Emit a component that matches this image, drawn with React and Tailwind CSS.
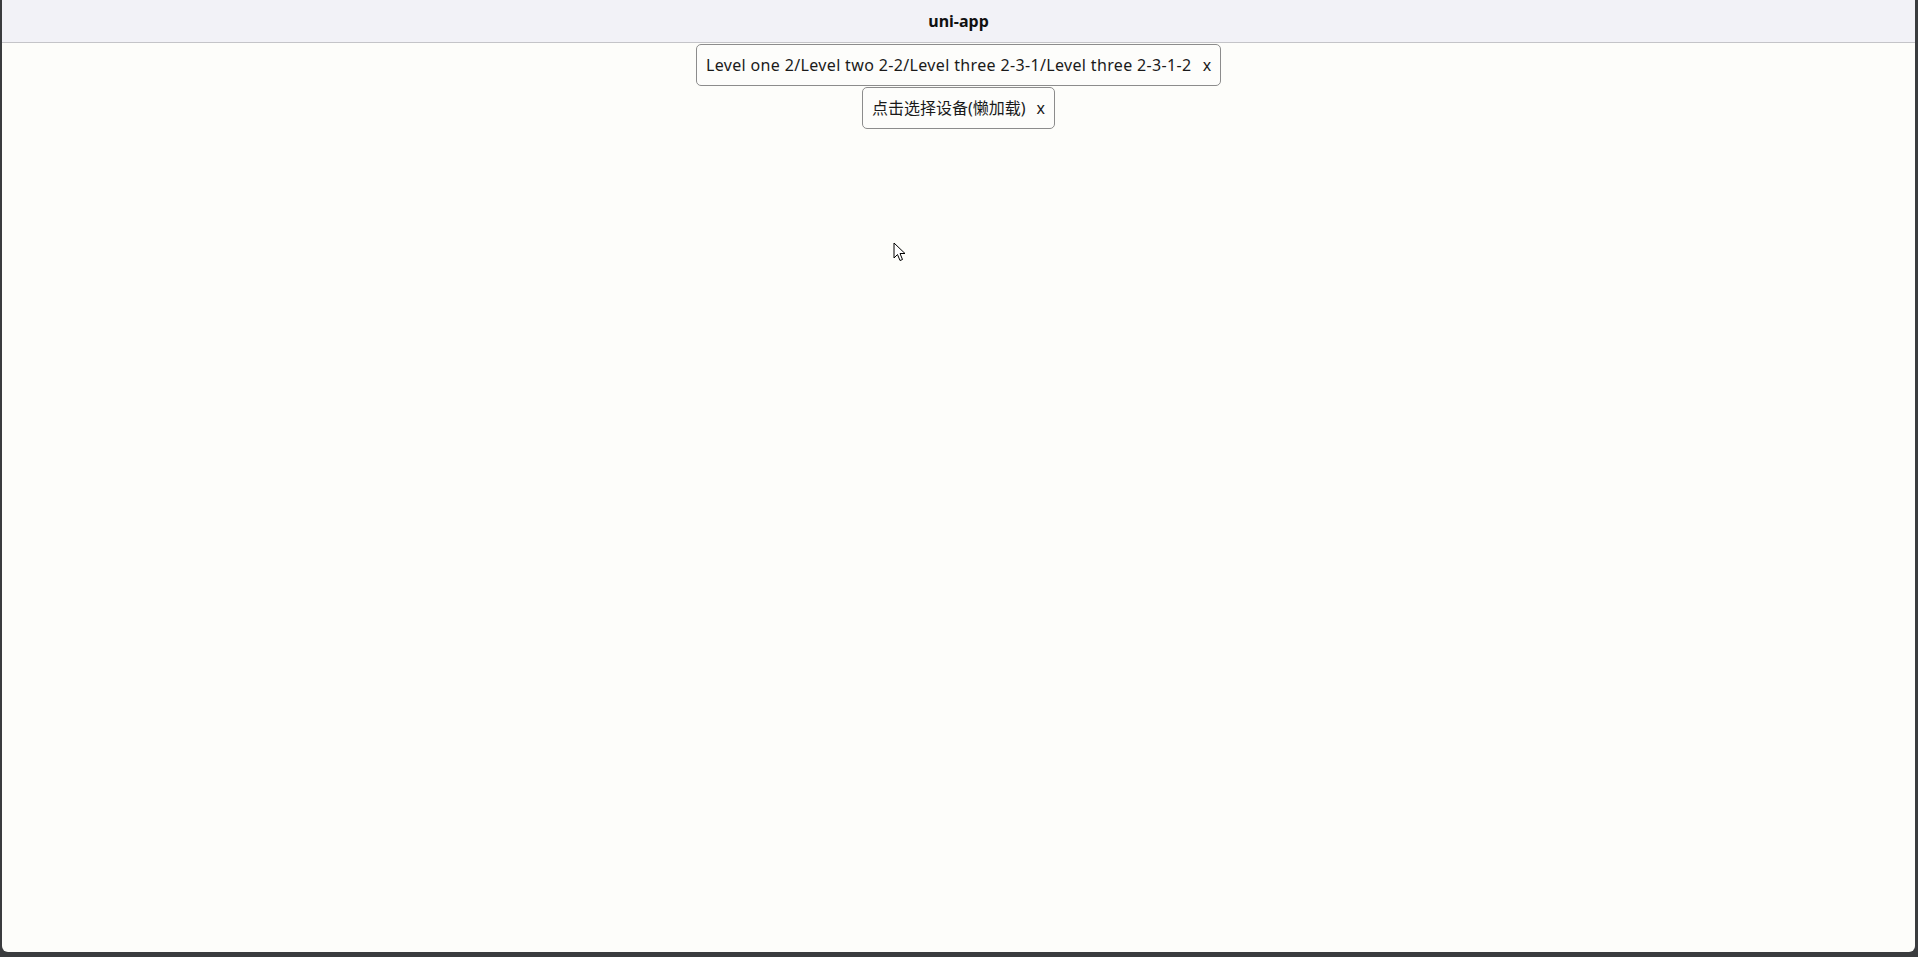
import { useState } from "react";

const font = { fontFamily: '"Noto Sans", "Noto Sans CJK SC", sans-serif' };

const Chip = ({ label, wide, onClear }) => (
  <button
    type="button"
    onClick={onClear}
    className="mt-px flex h-[42px] items-center rounded-[5px] border border-[#8c8c8c] bg-[#fdfdfb] px-[9px] text-[16px] text-[#1a1a1a]"
  >
    <span className={wide ? "tracking-[0.35px]" : ""}>{label}</span>
    <span className="ml-[11px]">x</span>
  </button>
);

const Cursor = () => (
  <svg
    className="pointer-events-none absolute left-[891px] top-[242px]"
    width="13"
    height="21"
    viewBox="0 0 13 21"
  >
    <path
      d="M1 1 L1 16 L4.5 12.5 L7 18.5 L9.5 17.5 L7 11.5 L12 11.5 Z"
      fill="#fff"
      stroke="#000"
      strokeWidth="1"
    />
  </svg>
);

export default function App() {
  const [cascade, setCascade] = useState(
    "Level one 2/Level two 2-2/Level three 2-3-1/Level three 2-3-1-2"
  );
  const [device, setDevice] = useState("点击选择设备(懒加载)");

  return (
    <div className="h-[957px] w-[1918px] bg-[#3a3c3e] pb-[5px] pl-[2px] pr-[3px]" style={font}>
      <div className="relative flex h-full flex-col overflow-hidden rounded-b-[6px] bg-[#fdfdfa]">
        <header className="flex h-[43px] shrink-0 items-center justify-center border-b border-[#c4c4c8] bg-[#f2f2f7]">
          <h1 className="text-[16px] font-bold text-[#111]">uni-app</h1>
        </header>

        <div className="flex flex-col items-center">
          <Chip label={cascade} wide onClear={() => setCascade(cascade)} />
          <Chip label={device} onClear={() => setDevice(device)} />
        </div>

        <Cursor />
      </div>
    </div>
  );
}
